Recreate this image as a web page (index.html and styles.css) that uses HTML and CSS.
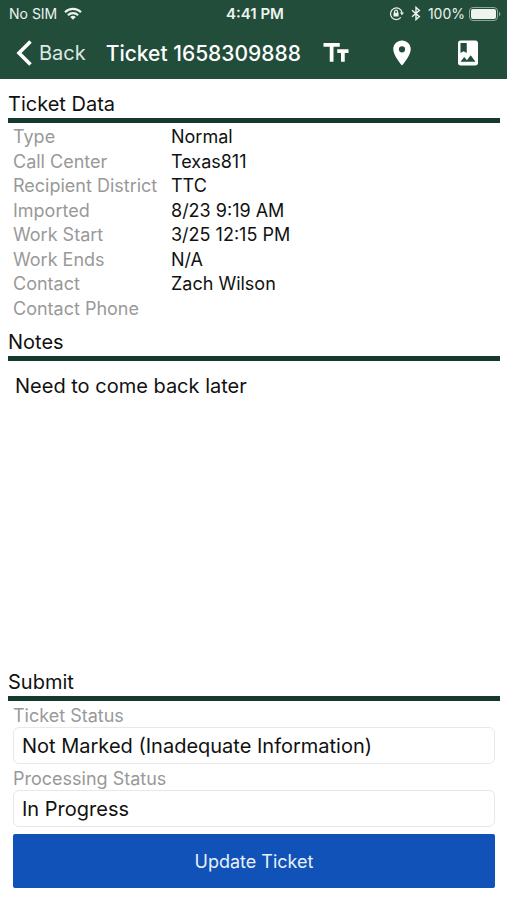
FILE: index.html
```html
<!DOCTYPE html>
<html lang="en">
<head>
  <meta charset="UTF-8" />
  <meta name="viewport" content="width=device-width, initial-scale=1.0"/>
  <title>Ticket 1658309888</title>
  <link rel="stylesheet" href="styles.css">
</head>
<body>
  <header class="topbar">
    <div class="status">
      <div class="status-left">
        <span>No SIM</span>
        <svg viewBox="0 0 18 13" width="18" height="13" fill="none" stroke="currentColor" stroke-width="2.2">
          <path d="M1 5.2a11.5 11.5 0 0 1 16 0"/>
          <path d="M3.9 8.2a7.3 7.3 0 0 1 10.2 0"/>
          <path d="M9 12.8L6.2 10a4 4 0 0 1 5.6 0z" fill="currentColor" stroke="none"/>
        </svg>
      </div>
      <span class="time">4:41 PM</span>
      <div class="status-right">
        <svg viewBox="0 0 16 16" width="15" height="15" fill="none" stroke="currentColor" stroke-width="1.3">
          <path d="M12.6 12.2A6.2 6.2 0 1 1 13.9 7"/>
          <path d="M11.6 6.8h4.4l-2.2 3z" fill="currentColor" stroke="none"/>
          <path d="M4.8 7.2h5.4v4H4.8z" fill="currentColor" stroke="none"/>
          <path d="M5.9 7.4V6a1.6 1.6 0 0 1 3.2 0v1.4"/>
        </svg>
        <svg viewBox="0 0 10 15" width="10" height="15" fill="none" stroke="currentColor" stroke-width="1.4">
          <path d="M1 4.2l7.4 6.4L5 13.6V1.4l3.4 3L1 10.8"/>
        </svg>
        <div class="battery">
          <span>100%</span>
          <svg viewBox="0 0 32 14" width="32" height="14">
            <rect x="0.5" y="0.5" width="28" height="13" rx="3.5" fill="none" stroke="#8fa69b"/>
            <rect x="2" y="2" width="25" height="10" rx="2" fill="currentColor"/>
            <path d="M30 4.8c2 .8 2 3.6 0 4.400z" fill="#8fa69b"/>
          </svg>
        </div>
      </div>
    </div>

    <nav class="navbar">
      <a href="#" class="back">
        <svg viewBox="0 0 16 26" width="16" height="26" fill="none" stroke="currentColor" stroke-width="3.6">
          <path d="M14.5 1.5L3 13l11.5 11.5"/>
        </svg>
        <span>Back</span>
      </a>
      <h1>Ticket 1658309888</h1>
      <div class="actions">
        <button type="button" aria-label="Text size">
          <svg viewBox="0 0 24 24" width="30" height="30" fill="currentColor"><path d="M2 4v3h5v12h3V7h5V4H2zm20 5h-9v3h3v7h3v-7h3V9z"/></svg>
        </button>
        <button type="button" aria-label="Map">
          <svg viewBox="0 0 24 24" width="30" height="30" fill="currentColor"><path d="M12 2C8.13 2 5 5.13 5 9c0 5.25 7 13 7 13s7-7.75 7-13c0-3.87-3.13-7-7-7zm0 9.500a2.5 2.5 0 1 1 0-5 2.5 2.5 0 0 1 0 5z"/></svg>
        </button>
        <button type="button" aria-label="Photos">
          <svg viewBox="0 0 24 24" width="30" height="30" fill="currentColor"><path d="M18 2H6c-1.1 0-2 .9-2 2v16c0 1.1.9 2 2 2h12c1.1 0 2-.9 2-2V4c0-1.1-.9-2-2-2zM6 4h5v8l-2.5-1.5L6 12V4zm0 15l3-3.86 2.14 2.58 3-3.86L18 19H6z"/></svg>
        </button>
      </div>
    </nav>
  </header>

  <main>
    <section>
      <h2>Ticket Data</h2>
      <table class="data">
        <tr><th scope="row">Type</th><td>Normal</td></tr>
        <tr><th scope="row">Call Center</th><td>Texas811</td></tr>
        <tr><th scope="row">Recipient District</th><td>TTC</td></tr>
        <tr><th scope="row">Imported</th><td>8/23 9:19 AM</td></tr>
        <tr><th scope="row">Work Start</th><td>3/25 12:15 PM</td></tr>
        <tr><th scope="row">Work Ends</th><td>N/A</td></tr>
        <tr><th scope="row">Contact</th><td>Zach Wilson</td></tr>
        <tr><th scope="row">Contact Phone</th><td></td></tr>
      </table>
    </section>

    <section class="notes">
      <h2><label for="notes">Notes</label></h2>
      <textarea id="notes">Need to come back later</textarea>
    </section>

    <section>
      <h2>Submit</h2>
      <form class="submit">
        <label for="ticketStatus">Ticket Status</label>
        <select id="ticketStatus">
          <option>Not Marked (Inadequate Information)</option>
        </select>
        <label for="processingStatus">Processing Status</label>
        <select id="processingStatus">
          <option>In Progress</option>
        </select>
        <button type="button" class="update">Update Ticket</button>
      </form>
    </section>
  </main>
</body>
</html>
```
FILE: styles.css
```css
* {
  box-sizing: border-box;
}

body {
  margin: 0;
  min-height: 100vh;
  display: flex;
  flex-direction: column;
  background: #fff;
  color: #111;
  font-family: Inter, "Liberation Sans", sans-serif;
  font-size: 18px;
}

svg {
  display: block;
}

button, select, textarea {
  font-family: inherit;
  color: inherit;
  border: none;
  background: none;
  margin: 0;
  padding: 0;
}

.topbar {
  background: #224d3a;
  color: #fff;
}

.status {
  display: grid;
  grid-template-columns: 1fr auto 1fr;
  align-items: center;
  height: 27px;
  padding: 0 6px 0 9px;
  font-size: 14px;
  color: #eef3f0;
}

.status-left, .status-right {
  display: flex;
  align-items: center;
  gap: 7px;
}

.status-right {
  justify-content: flex-end;
}

.battery {
  display: flex;
  align-items: center;
  gap: 4px;
}

.time {
  font-size: 15px;
  font-weight: 600;
}

.navbar {
  display: flex;
  align-items: center;
  height: 52px;
  padding: 0 24px 0 16px;
}

.back {
  display: flex;
  align-items: center;
  gap: 7px;
  color: #fff;
  font-size: 20px;
  text-decoration: none;
}

.back span {
  color: #dfe8e3;
}

h1 {
  margin: 0 0 0 20px;
  font-size: 21px;
  font-weight: 500;
  white-space: nowrap;
}

.actions {
  display: flex;
  gap: 36px;
  margin-left: auto;
}

.actions button {
  cursor: pointer;
}

main {
  flex: 1;
  display: flex;
  flex-direction: column;
  padding: 4px 7px 12px 8px;
}

h2 {
  margin: 7px 0 0;
  border-bottom: 5px solid #15392b;
  font-size: 20px;
  font-weight: 400;
  line-height: 28px;
}

.data {
  height: 196px;
  margin-top: 2px;
  border-collapse: collapse;
  line-height: 24px;
}

.data th, .data td {
  padding: 0 0 0 5px;
  text-align: left;
  font-weight: 400;
}

.data th {
  width: 158px;
  color: #999;
  white-space: nowrap;
}

.notes {
  flex: 1;
  display: flex;
  flex-direction: column;
}

textarea {
  flex: 1;
  width: 100%;
  padding: 11px 7px;
  font-size: 20px;
  line-height: 28px;
  resize: none;
}

.submit {
  display: flex;
  flex-direction: column;
  padding: 0 5px;
}

.submit label {
  margin-top: 4px;
  line-height: 22px;
  color: #999;
}

select {
  appearance: none;
  height: 37px;
  padding: 0 8px;
  border: 1px solid #e8e8e8;
  border-radius: 6px;
  font-size: 20px;
}

.update {
  height: 54px;
  margin-top: 7px;
  border-radius: 2px;
  background: #1052b8;
  color: #e8f0fb;
  font-size: 18px;
  cursor: pointer;
}
```
